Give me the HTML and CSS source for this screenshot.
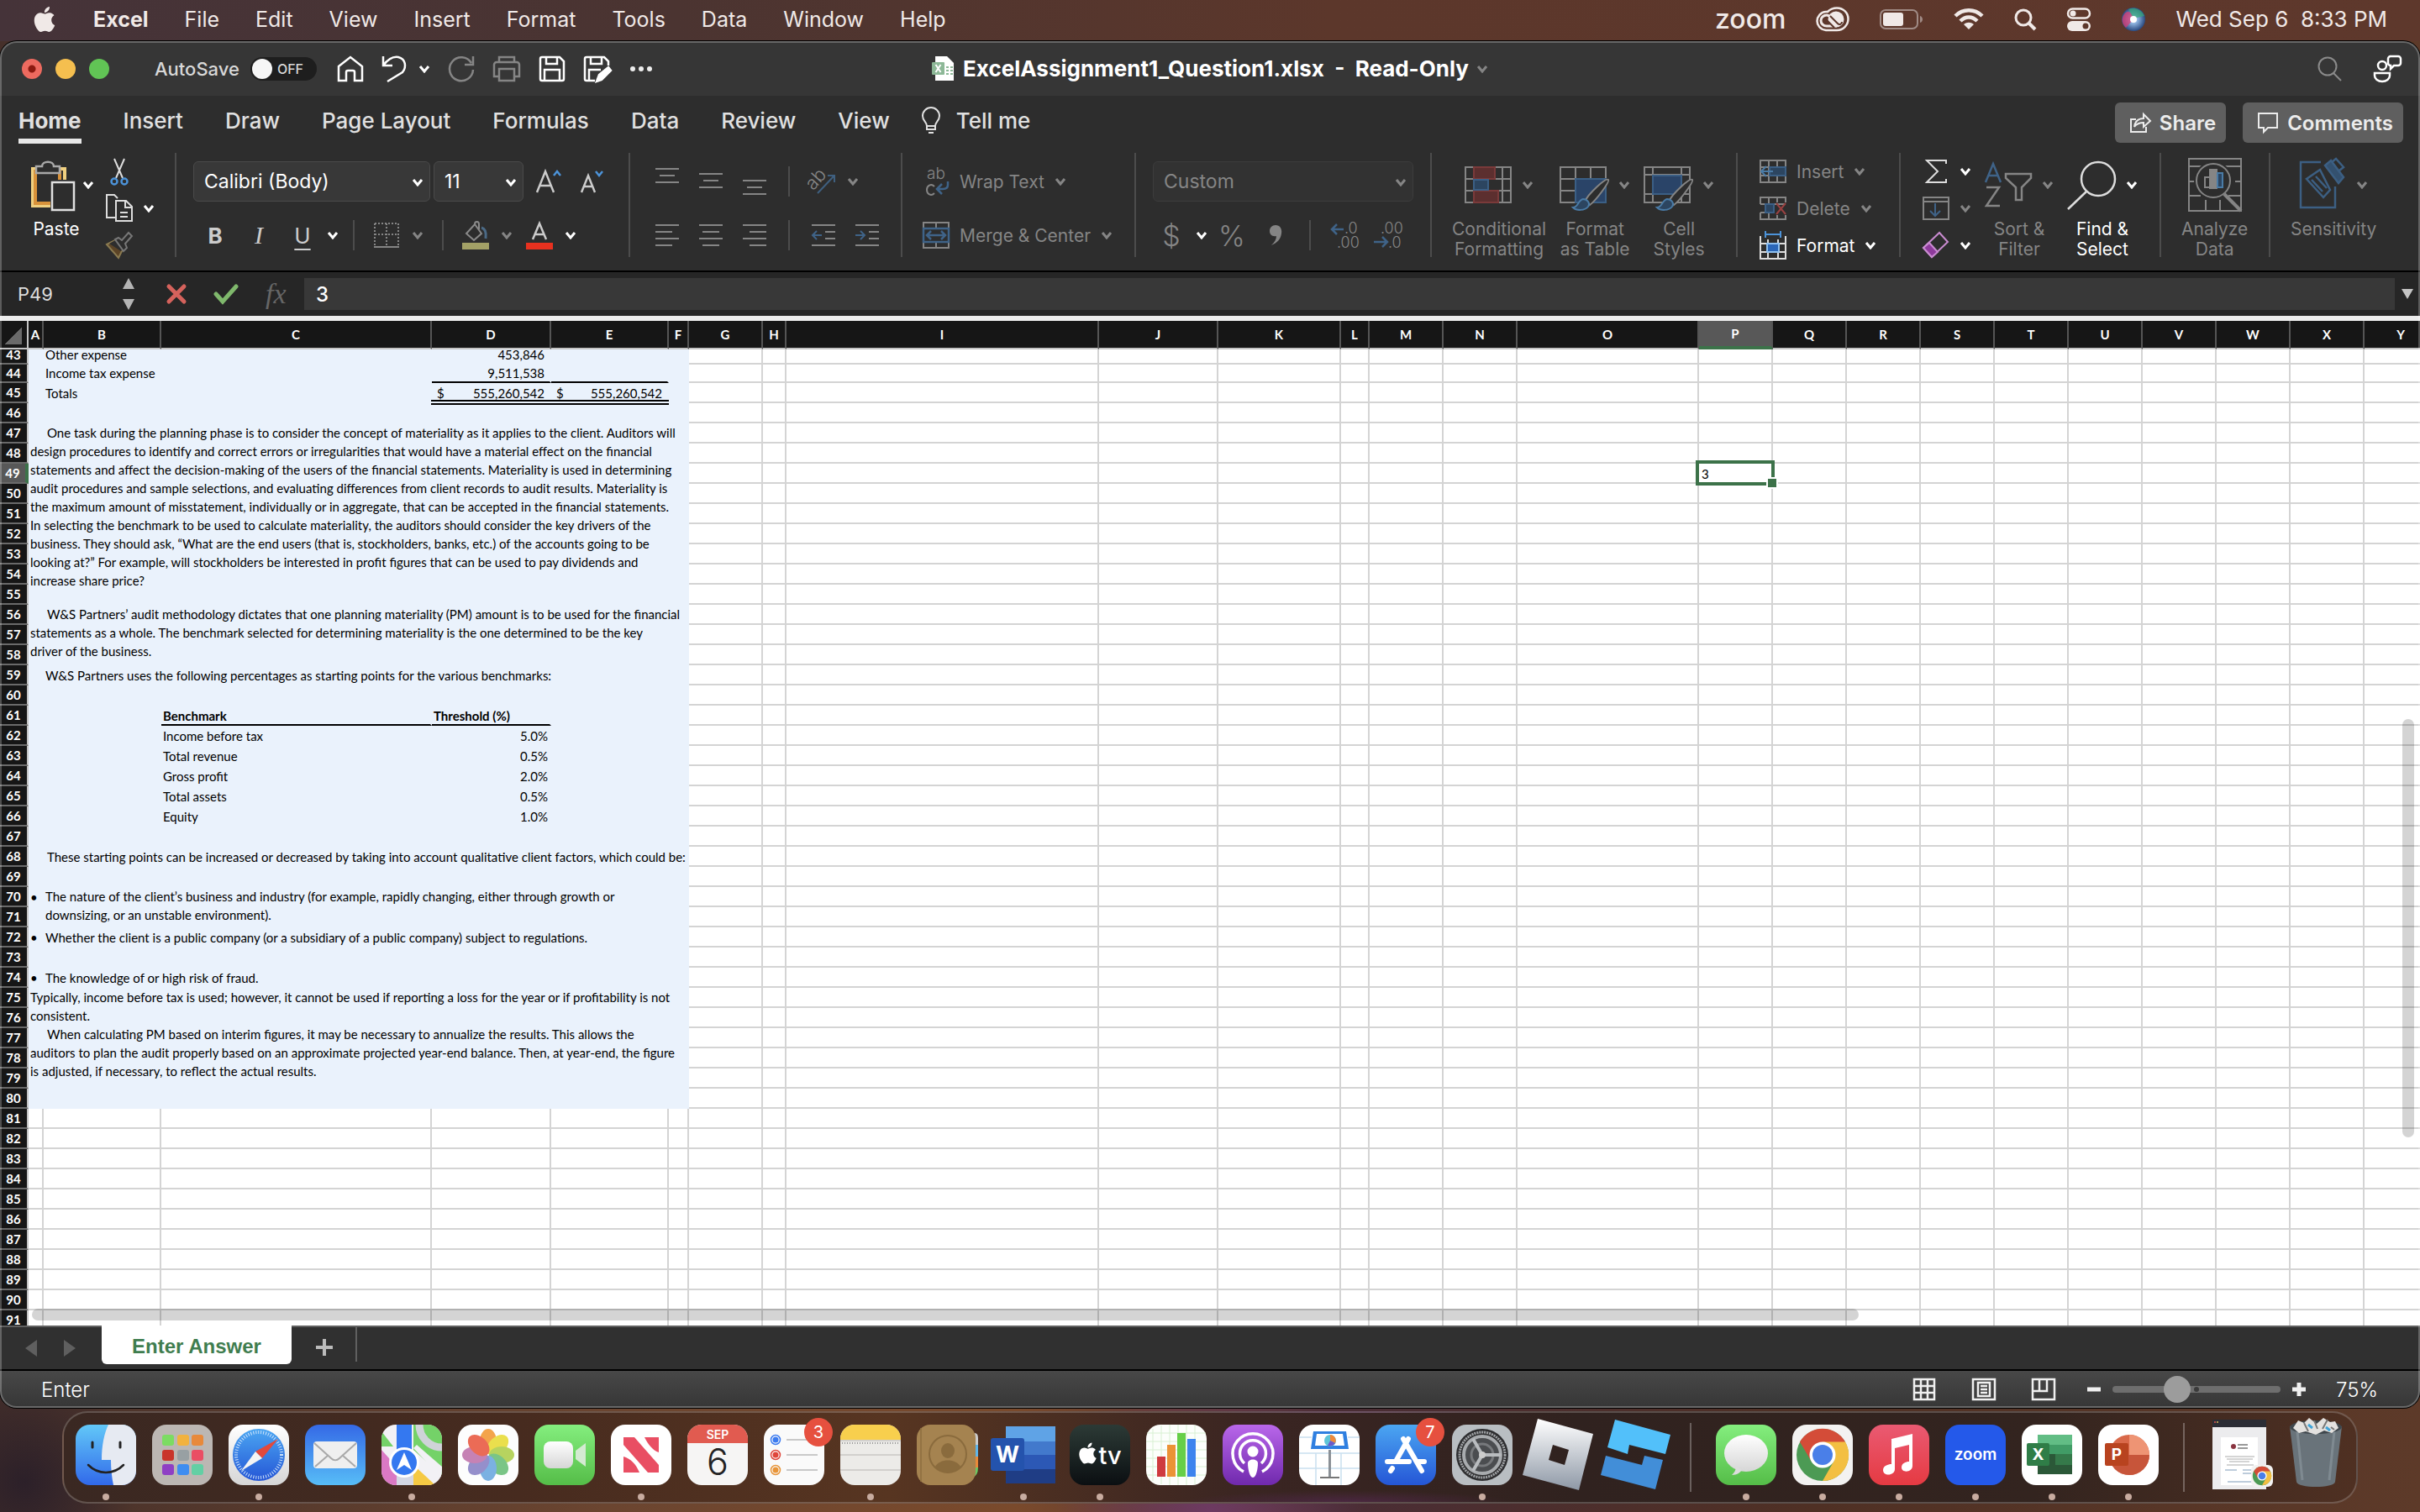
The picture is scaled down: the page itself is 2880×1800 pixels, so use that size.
FILE: index.html
```html
<!DOCTYPE html>
<html lang="en">
<head>
    <meta charset="UTF-8">
    <meta name="viewport" content="width=device-width, initial-scale=1.0">
    <title>ExcelAssignment1_Question1.xlsx</title>
    <link rel="stylesheet" href="styles.css">
</head>
<body>
    <svg class="defs" aria-hidden="true">
        <symbol id="chev" viewBox="0 0 14 10"><path d="M2 2l5 6 5-6" fill="none" stroke="currentColor" stroke-width="3"/></symbol>
        <symbol id="apple" viewBox="0 0 24 24"><path fill="currentColor" d="M12.152 6.896c-.948 0-2.415-1.078-3.96-1.04-2.04.027-3.91 1.183-4.961 3.014-2.117 3.675-.546 9.103 1.519 12.09 1.013 1.454 2.208 3.09 3.792 3.039 1.52-.065 2.09-.987 3.935-.987 1.831 0 2.35.987 3.96.948 1.637-.026 2.676-1.48 3.676-2.948 1.156-1.688 1.636-3.325 1.662-3.415-.039-.013-3.182-1.221-3.22-4.857-.026-3.04 2.48-4.494 2.597-4.559-1.429-2.09-3.623-2.324-4.39-2.376-2-.156-3.675 1.09-4.61 1.09zM15.53 3.83c.843-1.012 1.4-2.427 1.245-3.83-1.207.052-2.662.805-3.532 1.818-.78.896-1.454 2.338-1.273 3.714 1.338.104 2.715-.688 3.559-1.701"/></symbol>
        <symbol id="chrome" viewBox="0 0 72 72">
            <circle cx="36" cy="36" r="31" fill="#4c9a54"/>
            <path d="M36 36L9 20.500A31 31 0 0 1 63 20.500z" fill="#d44c38"/>
            <path d="M36 20.500H63A31 31 0 0 1 36 67L49.500 43.500z" fill="#f3bf42"/>
            <path d="M9 20.500L22.500 43.500 36 36V20z" fill="#d44c38"/>
            <circle cx="36" cy="36" r="15.500" fill="#fff"/>
            <circle cx="36" cy="36" r="12" fill="#4a7fe8"/>
        </symbol>
    </svg>

    <header class="menubar">
        <nav class="menus">
            <svg class="apple-logo" width="30" height="34"><use href="#apple"/></svg>
            <button class="app-name">Excel</button>
            <button>File</button>
            <button>Edit</button>
            <button>View</button>
            <button>Insert</button>
            <button>Format</button>
            <button>Tools</button>
            <button>Data</button>
            <button>Window</button>
            <button>Help</button>
        </nav>
        <div class="status-icons">
            <span class="zoom-word">zoom</span>
            <svg width="40" height="30" viewBox="0 0 40 30"><path d="M12 28C5 27 1.500 22 1.500 17S6 6 12 6h2C17 3 21 1.500 25 1.500c8 0 13.500 6 13.500 13S33 28 25 28z" fill="none" stroke="#f0e9e7" stroke-width="2.500"/><circle cx="24" cy="15" r="9.500" fill="#f0e9e7"/><path d="M25 23H13c-4 0-7-3-7-6.500S9 10 13 10c2 0 3 1 5 3l8 9" fill="none" stroke="#f0e9e7" stroke-width="3"/><path d="M13 16l9 9M17 11l9 9c2 2 5 1 5-2" fill="none" stroke="#5c372b" stroke-width="2"/></svg>
            <svg width="52" height="26" viewBox="0 0 52 26"><rect x="1" y="2" width="44" height="22" rx="6" fill="none" stroke="#a08b85" stroke-width="2"/><rect x="4" y="5" width="24" height="16" rx="3" fill="#f0e9e7"/><path d="M48 9c4 1 4 7 0 8z" fill="#a08b85"/></svg>
            <svg width="36" height="28" viewBox="0 0 36 28"><path d="M2 10C11 1 25 1 34 10M8 16c6-6 14-6 20 0" fill="none" stroke="#f0e9e7" stroke-width="4.500"/><path d="M12 20c4-3 8-3 12 0l-6 6z" fill="#f0e9e7"/></svg>
            <svg width="26" height="26" viewBox="0 0 26 26"><circle cx="11" cy="11" r="9" fill="none" stroke="#f0e9e7" stroke-width="3"/><path d="M17 17l8 8" stroke="#f0e9e7" stroke-width="4"/></svg>
            <svg width="30" height="28" viewBox="0 0 30 28"><rect x="2" y="1.500" width="26" height="11" rx="5.500" fill="none" stroke="#f0e9e7" stroke-width="2.500"/><circle cx="8" cy="7" r="3.500" fill="#f0e9e7"/><rect x="1" y="16" width="28" height="12" rx="6" fill="#f0e9e7"/><circle cx="23" cy="22" r="3.500" fill="#5c372b"/></svg>
            <svg width="28" height="28" viewBox="0 0 28 28"><defs><radialGradient id="siri"><stop offset="0" stop-color="#fff"/><stop offset=".35" stop-color="#8fb4e0"/><stop offset="1" stop-color="#2a4a80"/></radialGradient></defs><circle cx="14" cy="14" r="14" fill="url(#siri)"/><path d="M1 12C4 3 12 2 14 14L5 24C1 20 0 16 1 12z" fill="#d83b74" opacity=".75"/><path d="M8 2c7-3 16 0 19 8l-13 3z" fill="#35a877" opacity=".7"/><circle cx="14" cy="14" r="4" fill="#fff"/></svg>
            <time>Wed Sep 6&nbsp; 8:33 PM</time>
        </div>
    </header>

    <main class="window">
        <div class="titlebar">
            <div class="lights"><button class="light red" aria-label="Close"></button><button class="light yellow" aria-label="Minimize"></button><button class="light green" aria-label="Full screen"></button></div>
            <label class="autosave">AutoSave <span class="switch"><input type="checkbox"><span>OFF</span></span></label>
            <div class="quick">
                <button aria-label="Home"><svg width="32" height="32" viewBox="0 0 32 32"><path d="M2 13L16 2l14 11v17H21V20a2 2 0 0 0-2-2h-6a2 2 0 0 0-2 2v10H2z"/></svg></button>
                <button aria-label="Undo" class="undo"><svg width="30" height="32" viewBox="0 0 30 32"><path d="M2 1v11h11M2 12C8 4 14 1 20 2c9 2 10 12 5 18L7 31"/></svg><svg class="chev"><use href="#chev"/></svg></button>
                <button aria-label="Redo" class="dim"><svg width="32" height="32" viewBox="0 0 32 32"><path d="M30 1v10H20M28 9A14 14 0 1 0 30 17"/></svg></button>
                <button aria-label="Print" class="dim"><svg width="34" height="32" viewBox="0 0 34 32"><path d="M8 8V2h18v6M7 25H2V11a3 3 0 0 1 3-3h24a3 3 0 0 1 3 3v14h-5M8 16h18v14H8z"/></svg></button>
                <button aria-label="Save"><svg width="32" height="32" viewBox="0 0 32 32"><path d="M2 4a2 2 0 0 1 2-2h21l5 5v21a2 2 0 0 1-2 2H4a2 2 0 0 1-2-2zM9 2v8h13V2M7 30V17h18v13"/></svg></button>
                <button aria-label="Save as"><svg width="34" height="32" viewBox="0 0 34 32"><path d="M14 30H4a2 2 0 0 1-2-2V4a2 2 0 0 1 2-2h21l5 5v5M9 2v8h13V2M7 30V17h14"/><path d="M16 31l3-8 11-9 3 4-11 11z" fill="#fff"/></svg></button>
                <button aria-label="More"><svg width="28" height="8" viewBox="0 0 28 8"><g fill="#eee" stroke="none"><circle cx="4" cy="4" r="3"/><circle cx="14" cy="4" r="3"/><circle cx="24" cy="4" r="3"/></g></svg></button>
            </div>
            <h1 class="doc-title">
                <svg width="28" height="30" viewBox="0 0 28 30"><path d="M4 0h14l8 8v21H4z" fill="#fff"/><rect x="0" y="7" width="15" height="15" rx="1" fill="#8db897"/><path d="M4.500 10l6 9M10.500 10l-6 9" stroke="#fff" stroke-width="2"/><path d="M17 12h3v2h-3zM22 12h3v2h-3zM17 16h3v2h-3zM22 16h3v2h-3zM17 20h3v2h-3zM22 20h3v2h-3z" fill="#8db897"/></svg>
                <span>ExcelAssignment1_Question1.xlsx&nbsp; -&nbsp; Read-Only</span>
                <svg class="chev dim"><use href="#chev"/></svg>
            </h1>
            <div class="title-right">
                <button aria-label="Search"><svg width="30" height="30" viewBox="0 0 30 30"><circle cx="12" cy="12" r="10.500" fill="none" stroke="#8a8a8a" stroke-width="2"/><path d="M19 20l9 9" stroke="#8a8a8a" stroke-width="2"/></svg></button>
                <button aria-label="People"><svg width="34" height="34" viewBox="0 0 34 34" fill="none" stroke="#fff" stroke-width="2.500"><circle cx="11" cy="13" r="5"/><path d="M2 22h18v3c0 4-4 7-9 7s-9-3-9-7zM20 2h10a3 3 0 0 1 3 3v5a3 3 0 0 1-3 3h-5l-4 4v-4a3 3 0 0 1-3-3V5a3 3 0 0 1 3-3z"/></svg></button>
            </div>
        </div>

        <nav class="tabs">
            <button class="active">Home</button>
            <button>Insert</button>
            <button>Draw</button>
            <button>Page Layout</button>
            <button>Formulas</button>
            <button>Data</button>
            <button>Review</button>
            <button>View</button>
            <button class="tell"><svg width="22" height="32" viewBox="0 0 22 32"><path d="M6 22c0-5-5-6-5-12a10 10 0 0 1 20 0c0 6-5 7-5 12v4H6zM6 22h10M8 30h6" fill="none" stroke="currentColor" stroke-width="2"/></svg>Tell me</button>
            <div class="tab-actions">
                <button><svg width="26" height="26" viewBox="0 0 26 26"><path d="M8 9H2v15h18v-6M6 18c1-7 5-10 11-10V3l8 8-8 7v-5c-5 0-8 1-11 5z" fill="none" stroke="currentColor" stroke-width="2"/></svg>Share</button>
                <button><svg width="26" height="26" viewBox="0 0 26 26"><path d="M2 2h22v17H13l-5 5v-5H2z" fill="none" stroke="currentColor" stroke-width="2"/></svg>Comments</button>
            </div>
        </nav>

        <section class="ribbon">
            <div class="group clipboard">
                <button class="big paste">
                    <span class="big-icon"><svg width="56" height="64" viewBox="0 0 56 64"><path d="M5 13h38v44H5z" fill="none" stroke="#f0d080" stroke-width="4"/><path d="M8 14v40h20M37 14v14" fill="none" stroke="#d8923a" stroke-width="4"/><rect x="26" y="26" width="30" height="38" fill="#2d2d2d"/><path d="M9 18v-8h7c0-7 14-7 14 0h7v8z" fill="#2d2d2d" stroke="#a8a8a8" stroke-width="2.500"/><rect x="28" y="29" width="26" height="33" fill="#2d2d2d" stroke="#e0e0e0" stroke-width="2.500"/></svg><svg class="chev"><use href="#chev"/></svg></span>
                    <span>Paste</span>
                </button>
                <div class="stack">
                    <button aria-label="Cut"><svg width="32" height="34" viewBox="0 0 32 34"><path d="M10 2l10 23M22 2L12 25" stroke="#ddd" stroke-width="2"/><g fill="none" stroke="#4c93d9" stroke-width="2.500"><circle cx="10" cy="29" r="3.500"/><circle cx="22" cy="29" r="3.500"/></g></svg></button>
                    <button aria-label="Copy"><svg width="32" height="34" viewBox="0 0 32 34" fill="none" stroke="#ddd" stroke-width="2"><path d="M11 28H1V1h9l4 4M12 8h12l7 7v17H12zM23 8v8h8M17 22h9M17 27h9"/></svg><svg class="chev"><use href="#chev"/></svg></button>
                    <button aria-label="Format painter"><svg width="32" height="32" viewBox="0 0 32 32"><path d="M1 15l12-6 8 10-6 12z" fill="#5c4426" stroke="#8a7a50" stroke-width="2"/><path d="M4 14l9-5 8 10-3 4z" fill="#2d2d2d"/><path d="M11 9l4-2 4 3 8-9 4 4-8 9 2 5-4 4z" fill="#2d2d2d" stroke="#777" stroke-width="2"/></svg></button>
                </div>
            </div>
            <div class="rule"></div>

            <div class="group font">
                <div class="row">
                    <div class="pick pick-font"><select aria-label="Font"><option>Calibri (Body)</option></select><svg class="chev"><use href="#chev"/></svg></div>
                    <div class="pick pick-size"><select aria-label="Font size"><option>11</option></select><svg class="chev"><use href="#chev"/></svg></div>
                    <div class="tools">
                        <button class="tool" aria-label="Grow font"><svg width="32" height="30" viewBox="0 0 32 30"><path d="M2 28L12 3l10 25M5 20h14" fill="none" stroke="#ccc" stroke-width="2.500"/><path d="M22 8l4-5 4 5" fill="none" stroke="#4c93d9" stroke-width="2.500"/></svg></button>
                        <button class="tool" aria-label="Shrink font"><svg width="32" height="30" viewBox="0 0 32 30"><path d="M3 28L11 8l8 20M6 21h10" fill="none" stroke="#ccc" stroke-width="2.500"/><path d="M20 3l4 5 4-5" fill="none" stroke="#4c93d9" stroke-width="2.500"/></svg></button>
                    </div>
                </div>
                <div class="row tools">
                    <button class="tool bold">B</button>
                    <button class="tool italic">I</button>
                    <button class="tool underline">U</button>
                    <button class="only-chev" aria-label="Underline style"><svg class="chev"><use href="#chev"/></svg></button>
                    <div class="mini-rule"></div>
                    <button class="split dim" aria-label="Borders"><svg width="32" height="32" viewBox="0 0 32 32" fill="none" stroke="currentColor" stroke-width="2"><path d="M2 2h28M2 2v26M30 2v26M16 2v26M2 15h28" stroke-dasharray="2 2"/><path d="M1 30h30"/></svg><svg class="chev"><use href="#chev"/></svg></button>
                    <div class="mini-rule"></div>
                    <button class="split dim" aria-label="Fill color"><svg width="32" height="34" viewBox="0 0 32 34"><path d="M5 15L15 4l8 11-9 8zM15 4c0-4 5-4 5 0v6" fill="none" stroke="#8a8a8a" stroke-width="2"/><path d="M23 8c4 1 6 5 5 13" fill="none" stroke="#4b6a86" stroke-width="3"/><rect y="26" width="32" height="8" fill="#a3a166"/></svg><svg class="chev"><use href="#chev"/></svg></button>
                    <button class="split" aria-label="Font color"><svg width="32" height="34" viewBox="0 0 32 34"><path d="M8 22L16 3l8 19M11 16h10" fill="none" stroke="#ccc" stroke-width="2.500"/><rect y="26" width="32" height="8" fill="#e8311f"/></svg><svg class="chev"><use href="#chev"/></svg></button>
                </div>
            </div>
            <div class="rule"></div>

            <div class="group align dim">
                <div class="row tools">
                    <button class="tool" aria-label="Top"><svg width="28" height="34" viewBox="0 0 28 34"><path d="M0 2h28M5 10h18M0 18h28"/></svg></button>
                    <button class="tool" aria-label="Middle"><svg width="28" height="34" viewBox="0 0 28 34"><path d="M0 8h28M5 16h18M0 24h28"/></svg></button>
                    <button class="tool" aria-label="Bottom"><svg width="28" height="34" viewBox="0 0 28 34"><path d="M0 16h28M5 24h18M0 32h28"/></svg></button>
                    <div class="mini-rule"></div>
                    <button class="split" aria-label="Orientation"><svg width="32" height="32" viewBox="0 0 32 32"><text x="-2" y="22" font-size="22" transform="rotate(-48 8 16)" class="glyph">ab</text><path d="M11 30L31 9M23 9h8v8" stroke="#3f5f7f"/></svg><svg class="chev"><use href="#chev"/></svg></button>
                </div>
                <div class="row tools">
                    <button class="tool" aria-label="Left"><svg width="28" height="28" viewBox="0 0 28 28"><path d="M0 2h28M0 10h20M0 18h28M0 26h20"/></svg></button>
                    <button class="tool" aria-label="Center"><svg width="28" height="28" viewBox="0 0 28 28"><path d="M0 2h28M4 10h20M0 18h28M4 26h20"/></svg></button>
                    <button class="tool" aria-label="Right"><svg width="28" height="28" viewBox="0 0 28 28"><path d="M0 2h28M8 10h20M0 18h28M8 26h20"/></svg></button>
                    <div class="mini-rule"></div>
                    <button class="tool" aria-label="Outdent"><svg width="28" height="28" viewBox="0 0 28 28"><path d="M0 2h28M16 10h12M16 18h12M0 26h28"/><path d="M12 14H2M6 9l-5 5 5 5" stroke="#3f6388"/></svg></button>
                    <button class="tool" aria-label="Indent"><svg width="28" height="28" viewBox="0 0 28 28"><path d="M0 2h28M16 10h12M16 18h12M0 26h28"/><path d="M0 14h10M6 9l5 5-5 5" stroke="#3f6388"/></svg></button>
                </div>
            </div>
            <div class="rule"></div>

            <div class="group wrap dim">
                <div class="row"><button class="labeled"><svg width="32" height="34" viewBox="0 0 32 34"><text x="5" y="14" font-size="19" class="glyph">ab</text><path d="M14 23c-4-4-9-1-9 4s5 8 9 4" fill="none" stroke="currentColor" stroke-width="2"/><path d="M30 17v4c0 4-3 5-6 5h-6M23 20l-6 6 6 6" fill="none" stroke="#3f6388" stroke-width="2.500"/></svg>Wrap Text<svg class="chev"><use href="#chev"/></svg></button></div>
                <div class="row"><button class="labeled"><svg width="32" height="32" viewBox="0 0 32 32" fill="none" stroke="currentColor" stroke-width="2"><path d="M1 1h30v30H1zM16 1v6M16 25v6"/><path d="M1 8h30v16H1zM6 16h20M10 11l-5 5 5 5M22 11l5 5-5 5" stroke="#3f6388" stroke-width="2.500"/></svg>Merge &amp; Center<svg class="chev"><use href="#chev"/></svg></button></div>
            </div>
            <div class="rule"></div>

            <div class="group number">
                <div class="row"><div class="pick pick-number dim"><select aria-label="Number format"><option>Custom</option></select><svg class="chev"><use href="#chev"/></svg></div></div>
                <div class="row tools dim">
                    <button class="tool sign">$</button>
                    <button class="only-chev bright" aria-label="Currency"><svg class="chev"><use href="#chev"/></svg></button>
                    <button class="tool sign">%</button>
                    <button class="tool" aria-label="Comma"><svg width="16" height="28" viewBox="0 0 16 28"><path d="M8 2c5 0 8 4 7 10-1 7-5 11-12 14 4-4 6-7 6-11C4 16 1 13 1 9s3-7 7-7z" fill="currentColor"/></svg></button>
                    <div class="mini-rule"></div>
                    <button class="tool" aria-label="Increase decimal"><svg width="34" height="32" viewBox="0 0 34 32"><text x="17" y="14" font-size="18" class="glyph">.0</text><text x="8" y="31" font-size="18" class="glyph">.00</text><path d="M16 9H2M8 3L2 9l6 6" fill="none" stroke="#3f6388" stroke-width="2.500"/></svg></button>
                    <button class="tool" aria-label="Decrease decimal"><svg width="34" height="32" viewBox="0 0 34 32"><text x="8" y="14" font-size="18" class="glyph">.00</text><text x="17" y="31" font-size="18" class="glyph">.0</text><path d="M0 24h16M10 18l6 6-6 6" fill="none" stroke="#3f6388" stroke-width="2.500"/></svg></button>
                </div>
            </div>
            <div class="rule"></div>

            <div class="group styles dim">
                <button class="big">
                    <span class="big-icon"><svg width="56" height="64" viewBox="0 0 56 64" fill="none" stroke="currentColor" stroke-width="2"><path d="M1 11h54v42H1zM1 25h54M1 39h54M11 11v42M45 11v42"/><path d="M11 11h25v14H11zM11 39h29v14H11z" fill="#5c2f2f" stroke="#7a3a3a"/><path d="M11 26h17v12H11z" fill="#2c4560" stroke="#3b5f85"/></svg><svg class="chev"><use href="#chev"/></svg></span>
                    <span>Conditional<br>Formatting</span>
                </button>
                <button class="big">
                    <span class="big-icon"><svg width="58" height="64" viewBox="0 0 58 64" fill="none" stroke="currentColor" stroke-width="2"><path d="M1 11h54v42H1zM1 25h54M1 39h54M19 11v42M37 11v42"/><path d="M19 25h36v28H19z" fill="#2a4468" stroke="#3b5f85"/><path d="M58 26c2 2-14 24-22 30l-6-4c4-9 25-29 28-26z" fill="#2d2d2d"/><path d="M28 49c5 0 9 5 6 9-4 5-14 5-18 1 6 0 6-9 12-10z" fill="#2c4560" stroke="#4a7ba6"/></svg><svg class="chev"><use href="#chev"/></svg></span>
                    <span>Format<br>as Table</span>
                </button>
                <button class="big">
                    <span class="big-icon"><svg width="58" height="64" viewBox="0 0 58 64" fill="none" stroke="currentColor" stroke-width="2"><path d="M1 11h54v42H1zM1 20h54M1 43h54M11 11v42M45 11v42"/><path d="M11 21h34v22H11z" fill="#2a4468" stroke="#3b5f85"/><path d="M58 26c2 2-14 24-22 30l-6-4c4-9 25-29 28-26z" fill="#2d2d2d"/><path d="M28 49c5 0 9 5 6 9-4 5-14 5-18 1 6 0 6-9 12-10z" fill="#2c4560" stroke="#4a7ba6"/></svg><svg class="chev"><use href="#chev"/></svg></span>
                    <span>Cell<br>Styles</span>
                </button>
            </div>
            <div class="rule"></div>

            <div class="group cells">
                <div class="stack">
                    <button class="dim"><svg width="32" height="28" viewBox="0 0 32 28" fill="none" stroke="currentColor" stroke-width="2"><path d="M1 1h30v26H1zM11 1v26M21 1v26M1 9h30M1 19h30"/><path d="M12 9h19v10H12z" fill="#2c4560" stroke="#3b5f85"/><path d="M16 14H3M8 8l-6 6 6 6" stroke="#4a7ba6"/></svg>Insert<svg class="chev"><use href="#chev"/></svg></button>
                    <button class="dim"><svg width="32" height="28" viewBox="0 0 32 28" fill="none" stroke="currentColor" stroke-width="2"><path d="M1 9V1h30v6M1 19v8h30v-5M11 1v8M21 1v6M11 19v8M21 22v5M1 9h30M1 19h14"/><path d="M7 9h10v10H7z" fill="#2c4560" stroke="#3b5f85"/><path d="M20 8l11 13M31 8L20 21" stroke="#9a4040"/></svg>Delete<svg class="chev"><use href="#chev"/></svg></button>
                    <button><svg width="32" height="34" viewBox="0 0 32 34" fill="none" stroke="#ddd" stroke-width="2"><path d="M1 6v27h30V6M1 15h30M1 25h30M10 10v23M22 10v23"/><path d="M9 15h14v10H9z" fill="#2a66b8" stroke="#8fc0f0"/><path d="M7 4h18M7 0v8M25 0v8" stroke="#4c93d9"/></svg>Format<svg class="chev"><use href="#chev"/></svg></button>
                </div>
            </div>
            <div class="rule"></div>

            <div class="group edit">
                <div class="stack">
                    <button aria-label="Sum"><svg width="32" height="30" viewBox="0 0 32 30"><path d="M28 6V2H5l13 13L5 28h23v-4" fill="none" stroke="#ddd" stroke-width="2"/></svg><svg class="chev"><use href="#chev"/></svg></button>
                    <button class="dim" aria-label="Fill"><svg width="32" height="28" viewBox="0 0 32 28" fill="none" stroke="currentColor" stroke-width="2"><path d="M1 1h30v26H1zM1 6h30"/><path d="M15 8v15M9 17l6 6 6-6" stroke="#3f6388"/></svg><svg class="chev"><use href="#chev"/></svg></button>
                    <button aria-label="Clear"><svg width="32" height="32" viewBox="0 0 32 32"><path d="M1 19L20 1l10 11-19 18z" fill="none" stroke="#c98bd0" stroke-width="2"/><path d="M1 19l7-6 10 11-7 6z" fill="#8e3a9c" stroke="#c98bd0" stroke-width="2"/></svg><svg class="chev"><use href="#chev"/></svg></button>
                </div>
                <button class="big dim">
                    <span class="big-icon"><svg width="56" height="64" viewBox="0 0 56 64" fill="none" stroke="currentColor" stroke-width="2.500"><path d="M1 29l9-22 9 22M4 21h12" stroke="#3f6388"/><path d="M2 35h15L2 57h16M25 19h30v5L44 35v15h-7V35L25 24z"/></svg><svg class="chev"><use href="#chev"/></svg></span>
                    <span>Sort &amp;<br>Filter</span>
                </button>
                <button class="big">
                    <span class="big-icon"><svg width="58" height="64" viewBox="0 0 58 64" fill="none" stroke="#ddd" stroke-width="2.500"><circle cx="37" cy="25" r="20"/><path d="M23 40L1 61"/></svg><svg class="chev"><use href="#chev"/></svg></span>
                    <span>Find &amp;<br>Select</span>
                </button>
            </div>
            <div class="rule"></div>

            <div class="group analyze dim">
                <button class="big">
                    <span class="big-icon"><svg width="64" height="64" viewBox="0 0 64 64" fill="none" stroke="currentColor" stroke-width="2"><path d="M1 1h62v62H1zM1 10h62M1 28h8M1 45h14M56 28h7M48 45h15M21 50v13M38 50v13M52 10"/><circle cx="30" cy="27" r="23" fill="#2d2d2d" stroke="none"/><circle cx="30" cy="27" r="20"/><path d="M43 43l20 20" stroke-width="4"/><rect x="20" y="23" width="6" height="12"/><rect x="26" y="14" width="8" height="22" fill="currentColor"/><rect x="35" y="18" width="6" height="17" fill="#2c4560" stroke="#4a7ba6"/></svg></span>
                    <span>Analyze<br>Data</span>
                </button>
            </div>
            <div class="rule"></div>

            <div class="group sens dim">
                <button class="big">
                    <span class="big-icon"><svg width="56" height="64" viewBox="0 0 56 64" fill="none" stroke="#3c5f83" stroke-width="2.500"><path d="M26 5H2v54h41V34"/><path d="M31 9l7-6 15 20-6 7z" fill="#34516f"/><path d="M39 5l5-4 9 10-5 4M25 14L9 25l20 22 8-9z"/><path d="M15 26l13 14M20 22l13 14"/></svg><svg class="chev"><use href="#chev"/></svg></span>
                    <span>Sensitivity</span>
                </button>
            </div>
        </section>

        <div class="formula-bar">
            <div class="name-box"><input aria-label="Name box" value="P49">
                <svg width="14" height="38" viewBox="0 0 14 38"><path d="M0 13L7 0l7 13zM0 25l7 13 7-13z" fill="#b4b4b4"/></svg></div>
            <button aria-label="Cancel"><svg width="24" height="24" viewBox="0 0 24 24"><path d="M3 3l18 18M21 3L3 21" stroke="#d5625c" stroke-width="5" stroke-linecap="round"/></svg></button>
            <button aria-label="Confirm"><svg width="30" height="24" viewBox="0 0 30 24"><path d="M3 12l8 9L27 3" fill="none" stroke="#7fb86c" stroke-width="5" stroke-linecap="round"/></svg></button>
            <span class="fx">fx</span>
            <input class="formula" aria-label="Formula" value="3">
            <svg width="14" height="12" viewBox="0 0 14 12"><path d="M0 0h14L7 12z" fill="#c4c4c4"/></svg>
        </div>

        <div class="sheet-area">
            <div class="sheet" id="sheet">
                <table id="grid">
                    <colgroup></colgroup>
                    <thead></thead>
                    <tbody></tbody>
                </table>
            </div>
            <div class="bar-v"></div>
            <div class="bar-h"></div>
        </div>

        <div class="sheet-tabs">
            <button aria-label="Previous sheet"><svg width="14" height="20" viewBox="0 0 14 20"><path d="M14 0v20L0 10z" fill="#5f5f5f"/></svg></button>
            <button aria-label="Next sheet"><svg width="14" height="20" viewBox="0 0 14 20"><path d="M0 0v20l14-10z" fill="#5f5f5f"/></svg></button>
            <button class="sheet-tab">Enter Answer</button>
            <button class="add" aria-label="Add sheet"><svg width="20" height="20" viewBox="0 0 20 20"><path d="M10 0v20M0 10h20" stroke="#bbb" stroke-width="4"/></svg></button>
        </div>

        <footer class="statusbar">
            <span>Enter</span>
            <div class="views">
                <button aria-label="Normal"><svg width="28" height="28" viewBox="0 0 28 28"><path d="M2 2h24v24H2zM10 2v24M18 2v24M2 10h24M2 18h24"/></svg></button>
                <button aria-label="Page layout"><svg width="28" height="28" viewBox="0 0 28 28"><path d="M1 2h26v24H1zM7 6h14v16H7zM10 10h8M10 14h8M10 18h8"/></svg></button>
                <button aria-label="Page break"><svg width="28" height="28" viewBox="0 0 28 28"><path d="M1 2h26v24H1zM9 2v14M1 16h17V2"/></svg></button>
            </div>
            <div class="zoomer">
                <button aria-label="Zoom out"><svg width="16" height="16" viewBox="0 0 16 16"><path d="M0 8h16"/></svg></button>
                <div class="slider"><input type="range" min="0" max="100" value="36" aria-label="Zoom"><i></i></div>
                <button aria-label="Zoom in"><svg width="16" height="16" viewBox="0 0 16 16"><path d="M0 8h16M8 0v16"/></svg></button>
            </div>
            <span>75%</span>
        </footer>
    </main>

    <nav class="dock">
        <svg class="defs" aria-hidden="true">
            <linearGradient id="g-finder" x2="0" y2="1"><stop offset="0" stop-color="#62c8f8"/><stop offset="1" stop-color="#3169ea"/></linearGradient>
            <linearGradient id="g-mail" x2="0" y2="1"><stop offset="0" stop-color="#3569e6"/><stop offset="1" stop-color="#57bdf7"/></linearGradient>
            <linearGradient id="g-green" x2="0" y2="1"><stop offset="0" stop-color="#84ee7e"/><stop offset="1" stop-color="#55bd48"/></linearGradient>
            <linearGradient id="g-purple" x2="0" y2="1"><stop offset="0" stop-color="#b967ea"/><stop offset="1" stop-color="#7029ad"/></linearGradient>
            <linearGradient id="g-blue" x2="0" y2="1"><stop offset="0" stop-color="#4ba6f2"/><stop offset="1" stop-color="#2556d6"/></linearGradient>
            <linearGradient id="g-red" x2="0" y2="1"><stop offset="0" stop-color="#ea5a72"/><stop offset="1" stop-color="#e53a42"/></linearGradient>
            <linearGradient id="g-white" x2="0" y2="1"><stop offset="0" stop-color="#fff"/><stop offset="1" stop-color="#d6d6d6"/></linearGradient>
            <linearGradient id="g-steel" x2="0" y2="1"><stop offset="0" stop-color="#fff"/><stop offset="1" stop-color="#8e98a6"/></linearGradient>
            <linearGradient id="g-tv" x2="0" y2="1"><stop offset="0" stop-color="#2c3a36"/><stop offset="1" stop-color="#0b0f12"/></linearGradient>
        </svg>
        <button class="app running" aria-label="Finder"><svg viewBox="0 0 72 72"><rect width="72" height="72" rx="17" fill="url(#g-finder)"/><path d="M39 0h16a17 17 0 0 1 17 17v38a17 17 0 0 1-17 17H45c-2-9-3-20-3-30H31C31 25 34 10 39 0z" fill="#e6eaf2"/><path d="M20 21v6M53 21v6" stroke="#222" stroke-width="3" stroke-linecap="round"/><path d="M15 48c12 12 30 12 42 0" fill="none" stroke="#222" stroke-width="2.500" stroke-linecap="round"/></svg></button>
        <button class="app" aria-label="Launchpad"><svg viewBox="0 0 72 72"><rect width="72" height="72" rx="17" fill="#bcb7b3"/><rect x="12" y="12" width="14" height="13" rx="3" fill="#7cdc62"/><rect x="30" y="12" width="14" height="13" rx="3" fill="#f2b23e"/><rect x="47" y="12" width="14" height="13" rx="3" fill="#e8893a"/><rect x="12" y="30" width="14" height="13" rx="3" fill="#c9342a"/><rect x="30" y="30" width="14" height="13" rx="3" fill="#98a0a3"/><rect x="47" y="30" width="14" height="13" rx="3" fill="#ea4e64"/><rect x="12" y="47" width="14" height="13" rx="3" fill="#8f3fc4"/><rect x="30" y="47" width="14" height="13" rx="3" fill="#3f8df0"/><rect x="47" y="47" width="14" height="13" rx="3" fill="#63cfa4"/></svg></button>
        <button class="app running" aria-label="Safari"><svg viewBox="0 0 72 72"><rect width="72" height="72" rx="17" fill="url(#g-white)"/><circle cx="36" cy="36" r="31" fill="url(#g-blue)"/><circle cx="36" cy="36" r="27" fill="none" stroke="#cfe4fa" stroke-width="4" stroke-dasharray="1 2"/><path d="M59 17L40 40 32 32z" fill="#e2493c"/><path d="M15 55l17-23 8 8z" fill="#f4f4f4"/></svg></button>
        <button class="app" aria-label="Mail"><svg viewBox="0 0 72 72"><rect width="72" height="72" rx="17" fill="url(#g-mail)"/><rect x="10" y="20" width="52" height="32" rx="4" fill="#efefef"/><path d="M11 22l20 18c3 3 7 3 10 0l20-18M12 50l16-14M60 50L44 36" fill="none" stroke="#a9a9a9" stroke-width="2"/></svg></button>
        <button class="app running" aria-label="Maps"><svg viewBox="0 0 72 72"><defs><clipPath id="tile"><rect width="72" height="72" rx="17"/></clipPath></defs><g clip-path="url(#tile)"><rect width="72" height="72" fill="#f2f1f5"/><path d="M0 8l14 18H0zM38 0h34v60L38 30z" fill="#74d268"/><path d="M45 0a27 27 0 0 0 27 27" fill="none" stroke="#cfd3d8" stroke-width="9"/><path d="M0 30l18 20v22H0z" fill="#da79c4"/><path d="M38 72V48l26 24z" fill="#f5c944"/><path d="M38 28l34 36V50L42 24z" fill="#f2f1f5"/><rect x="18" width="18" height="72" fill="#3478f0"/><rect x="18" y="50" width="20" height="22" fill="#d4d7e4"/><circle cx="27" cy="45" r="18" fill="#fff"/><circle cx="27" cy="45" r="15" fill="#3478f0"/><path d="M27 33l9 21-9-6-9 6z" fill="#fff"/></g></svg></button>
        <button class="app" aria-label="Photos"><svg viewBox="0 0 72 72"><rect width="72" height="72" rx="17" fill="#fdfdfd"/><g opacity=".9"><ellipse cx="36" cy="20" rx="10" ry="15" fill="#f29b38"/><ellipse cx="36" cy="20" rx="10" ry="15" fill="#e8dc3a" transform="rotate(45 36 36)"/><ellipse cx="36" cy="20" rx="10" ry="15" fill="#b0cf4e" transform="rotate(90 36 36)"/><ellipse cx="36" cy="20" rx="10" ry="15" fill="#6cbf7a" transform="rotate(135 36 36)"/><ellipse cx="36" cy="20" rx="10" ry="15" fill="#6da9e0" transform="rotate(180 36 36)"/><ellipse cx="36" cy="20" rx="10" ry="15" fill="#8a84c6" transform="rotate(225 36 36)"/><ellipse cx="36" cy="20" rx="10" ry="15" fill="#c175ad" transform="rotate(270 36 36)"/><ellipse cx="36" cy="20" rx="10" ry="15" fill="#ea5c44" transform="rotate(315 36 36)"/></g></svg></button>
        <button class="app" aria-label="FaceTime"><svg viewBox="0 0 72 72"><rect width="72" height="72" rx="17" fill="url(#g-green)"/><rect x="11" y="20" width="35" height="32" rx="8" fill="url(#g-white)"/><path d="M49 31l12-9v28l-12-9z" fill="#d4ead2"/></svg></button>
        <button class="app running" aria-label="News"><svg viewBox="0 0 72 72"><rect width="72" height="72" rx="17" fill="#fff"/><path d="M15 15h13l29 33v9H44L15 24z" fill="#e94e63"/><path d="M40 15h17v18C50 31 44 23 40 15zM15 38v19h19c-4-10-11-17-19-19z" fill="#e94e63"/></svg></button>
        <button class="app" aria-label="Calendar"><svg viewBox="0 0 72 72"><rect width="72" height="72" rx="17" fill="#f6f5f4"/><path d="M0 22v-5A17 17 0 0 1 17 0h38a17 17 0 0 1 17 17v5z" fill="#e15b50"/><text x="36" y="17" font-size="14" font-weight="600" fill="#fff" text-anchor="middle">SEP</text><text x="36" y="60" font-size="43" font-weight="300" fill="#222" text-anchor="middle">6</text></svg></button>
        <button class="app" aria-label="Reminders"><svg viewBox="0 0 72 72"><rect width="72" height="72" rx="17" fill="#fafafa"/><g fill="none" stroke-width="1.500"><circle cx="14" cy="18" r="5.500" stroke="#3c7bf0"/><circle cx="14" cy="36" r="5.500" stroke="#e0463a"/><circle cx="14" cy="54" r="5.500" stroke="#e8953a"/></g><circle cx="14" cy="18" r="3.500" fill="#3c7bf0"/><circle cx="14" cy="36" r="3.500" fill="#e0463a"/><circle cx="14" cy="54" r="3.500" fill="#e8953a"/><path d="M27 18h37M27 36h37M27 54h37" stroke="#b9b9b9" stroke-width="1.500"/></svg><span class="badge">3</span></button>
        <button class="app running" aria-label="Notes"><svg viewBox="0 0 72 72"><rect width="72" height="72" rx="17" fill="#ecebe8"/><path d="M0 18v-1A17 17 0 0 1 17 0h38a17 17 0 0 1 17 17v1z" fill="#f8cf4d"/><path d="M0 19h72M0 36h72M0 54h72" stroke="#c9c8c4" stroke-width="1.500"/><path d="M2 22h68" stroke="#999" stroke-width="2" stroke-dasharray="1 2"/></svg></button>
        <button class="app" aria-label="Contacts"><svg viewBox="0 0 72 72"><path d="M66 10h3q4 0 4 6v8h-7z" fill="#ccc"/><path d="M66 24h7v14h-7z" fill="#5fb5e8"/><path d="M66 38h7v13h-7z" fill="#e8893a"/><path d="M66 51h7q0 10-7 12z" fill="#6cc964"/><rect width="70" height="72" rx="16" fill="#a58350"/><path d="M5 4v64" stroke="#8e6e3f" stroke-width="1.500"/><g fill="#8a6b3d"><circle cx="37" cy="35" r="22" fill="none" stroke="#8a6b3d" stroke-width="2"/><ellipse cx="37" cy="31" rx="8" ry="9"/><path d="M22 50c5-10 25-10 30 0-8 9-22 9-30 0z"/></g></svg></button>
        <button class="app running" aria-label="Word"><svg viewBox="0 0 72 72"><path d="M15 2h59v18H15z" fill="#5fa3e6"/><path d="M15 20h59v16H15z" fill="#4279cc"/><path d="M15 36h59v17H15z" fill="#2c58b5"/><path d="M15 53h59v17H15z" fill="#1f3d85"/><rect x="-3" y="16" width="40" height="39" rx="3" fill="#2453ad"/><text x="17" y="45" font-size="27" font-weight="700" fill="#fff" text-anchor="middle">W</text></svg></button>
        <button class="app running" aria-label="TV"><svg viewBox="0 0 72 72"><rect width="72" height="72" rx="17" fill="url(#g-tv)"/><svg x="9" y="21" width="25" height="26" color="#fff"><use href="#apple"/></svg><text x="48" y="47" font-size="29" font-weight="500" fill="#fff" text-anchor="middle">tv</text></svg></button>
        <button class="app" aria-label="Numbers"><svg viewBox="0 0 72 72"><rect width="72" height="72" rx="17" fill="#fcfefb"/><path d="M8 5v62M18 1v70M28 0v72M38 0v72M48 0v72M58 1v70M1 10h70M0 20h72M0 30h72M0 40h72M0 50h72M1 60h70" stroke="#d8f0d2"/><path d="M13 38h10v24H13z" fill="#cf3b3f"/><path d="M25 24h10v38H25z" fill="#eb9336"/><path d="M37 10h10v52H37z" fill="#66cf48"/><path d="M49 17h10v45H49z" fill="#3d84ee"/></svg></button>
        <button class="app" aria-label="Podcasts"><svg viewBox="0 0 72 72"><rect width="72" height="72" rx="17" fill="url(#g-purple)"/><g fill="none" stroke="#fff" stroke-width="3.500"><path d="M25 56a24 24 0 1 1 22 0"/><path d="M26 46a15.500 15.500 0 1 1 20 0"/></g><circle cx="36" cy="32" r="6.500" fill="#fff"/><path d="M30 46c0-6 12-6 12 0 0 6-2 17-6 17s-6-11-6-17z" fill="#fff"/></svg></button>
        <button class="app" aria-label="Keynote"><svg viewBox="0 0 72 72"><rect width="72" height="72" rx="17" fill="#fff"/><path d="M0 15h15M58 15h14M0 34h72M0 52h72M20 34v38M50 34v38" stroke="#c9e0f0" stroke-width="1.500"/><path d="M35 30h3v33h-3z" fill="#8a9096"/><path d="M25 62h23v2H25z" fill="#777"/><path d="M17 8h39l3 21H14z" fill="#2f7fe0"/><path d="M21 11h31l2 14H19z" fill="#fff"/><circle cx="37" cy="19" r="7" fill="#5ec5d8"/><path d="M37 19V12a7 7 0 0 1 6 10z" fill="#f0883a"/><path d="M37 19l6 3a7 7 0 0 1-9 3z" fill="#6c5ac8"/></svg></button>
        <button class="app" aria-label="App Store"><svg viewBox="0 0 72 72"><rect width="72" height="72" rx="17" fill="url(#g-blue)"/><g stroke="#fff" stroke-width="6" stroke-linecap="round"><path d="M39 17L25 42M33 17l22 38M14 44h26M50 44h8M20 52l-2 3"/></g></svg><span class="badge">7</span></button>
        <button class="app running" aria-label="System Settings"><svg viewBox="0 0 72 72"><rect width="72" height="72" rx="17" fill="#b9bec2"/><circle cx="36" cy="36" r="31" fill="#2e2e30"/><circle cx="36" cy="36" r="27" fill="none" stroke="#a0a3a6" stroke-width="3" stroke-dasharray="2 1"/><circle cx="36" cy="36" r="22" fill="#4b4d50" stroke="#a8abae" stroke-width="4"/><circle cx="36" cy="36" r="13" fill="none" stroke="#77797c" stroke-width="3"/><path d="M36 36h22M36 36L25 17M36 36L25 55" stroke="#b9bcbf" stroke-width="4"/><circle cx="36" cy="36" r="4" fill="#ccc"/></svg></button>
        <button class="app" aria-label="Roblox"><svg viewBox="0 0 72 72"><path fill-rule="evenodd" d="M11-7l66 18-17 67L-7 60zM29 24l-5 18 19 6 5-18z" fill="url(#g-steel)"/></svg></button>
        <button class="app" aria-label="Roblox Studio"><svg viewBox="0 0 72 72"><path d="M12-6l66 18-6 23-43-11-2 11-24-8z" fill="#52c0fa"/><path d="M1 37l43 11 3-11 22 5-9 35L-5 60z" fill="#428ed8"/></svg></button>
        <div class="dock-rule"></div>
        <button class="app running" aria-label="Messages"><svg viewBox="0 0 72 72"><rect width="72" height="72" rx="17" fill="url(#g-green)"/><ellipse cx="36" cy="34" rx="26" ry="22" fill="url(#g-white)"/><path d="M24 50c0 4-2 7-5 10 6 0 10-3 12-6z" fill="#dcdcdc"/></svg></button>
        <button class="app running" aria-label="Chrome"><svg viewBox="0 0 72 72"><rect width="72" height="72" rx="17" fill="#f3f2f1"/><use href="#chrome"/></svg></button>
        <button class="app running" aria-label="Music"><svg viewBox="0 0 72 72"><rect width="72" height="72" rx="17" fill="url(#g-red)"/><path d="M27 17l25-6v38c0 8-13 9-13 2 0-5 5-7 9-7V24l-17 4v25c0 8-14 9-14 1 0-5 6-7 10-7z" fill="#fff"/></svg></button>
        <button class="app running" aria-label="Zoom"><svg viewBox="0 0 72 72"><rect width="72" height="72" rx="17" fill="#2459ea"/><text x="36" y="42" font-size="19" font-weight="600" fill="#fff" text-anchor="middle">zoom</text></svg></button>
        <button class="app running" aria-label="Excel"><svg viewBox="0 0 72 72"><rect width="72" height="72" rx="17" fill="#fff"/><path d="M19 12h41v12H19z" fill="#62bd85"/><path d="M19 24h41v11H19z" fill="#419c66"/><path d="M19 35h21v13H19zM19 48h41v11H19z" fill="#2b5838"/><path d="M40 35h20v13H40z" fill="#35794a"/><rect x="6" y="22" width="27" height="27" rx="2" fill="#2f7d47"/><text x="19.500" y="42" font-size="19" font-weight="700" fill="#fff" text-anchor="middle">X</text></svg></button>
        <button class="app running" aria-label="PowerPoint"><svg viewBox="0 0 72 72"><rect width="72" height="72" rx="17" fill="#fff"/><circle cx="37" cy="36" r="24" fill="#d9694a"/><path d="M37 12a24 24 0 0 1 24 24H37z" fill="#ee9474"/><path d="M13 36h48a24 24 0 0 1-48 0z" fill="#c7553a"/><rect x="8" y="22" width="28" height="27" rx="2" fill="#b8431f"/><text x="22" y="42" font-size="19" font-weight="700" fill="#fff" text-anchor="middle">P</text></svg></button>
        <div class="dock-rule"></div>
        <button class="app" aria-label="Minimized window"><svg viewBox="0 0 72 72"><path d="M4-6h64v83H4z" fill="#ececee"/><path d="M4-6h64v9H4z" fill="#2b2d35"/><circle cx="7" cy="-3" r="1" fill="#d55"/><circle cx="10" cy="-3" r="1" fill="#db5"/><path d="M14 15h44v57H14z" fill="#fff"/><circle cx="29" cy="26" r="3" fill="#8a3440"/><path d="M34 24h12M34 28h12" stroke="#999" stroke-width="2"/><path d="M19 38h35M21 41h31M24 44h24M21 48h32" stroke="#aaa"/><path d="M19 54h14M40 54h14M40 58h12M22 68h30" stroke="#7d9ab8"/><rect x="50" y="48" width="26" height="26" rx="6" fill="#f3f2f1"/><svg x="50" y="48" width="26" height="26"><use href="#chrome"/></svg></svg></button>
        <button class="app" aria-label="Trash"><svg viewBox="0 0 72 72"><path d="M5 2h62l-8 66c-1 8-45 8-46 0z" fill="#69737a"/><path d="M14 8l6 58M58 8l-6 58" stroke="#8f9aa1" stroke-width="3" opacity=".6"/><ellipse cx="36" cy="3" rx="31" ry="8" fill="#3f474d"/><path d="M9 4l6-9 7 3 6-6 9 7 8-7 8 5 6-1 4 8-8 6-9-3-10 5-12-4-8 2z" fill="#e3e1df"/><path d="M22-2l5 10M34-5l4 10M50-6l-6 11M54 3l4 3" stroke="#777" stroke-width="2"/><path d="M27 0l5 4M48 3l5 4" stroke="#3fa3d8" stroke-width="3"/></svg></button>
    </nav>

    <script src="grid.js"></script>
</body>
</html>
```

FILE: styles.css
```css
*,
*::before,
*::after {
    box-sizing: border-box;
}

body {
    margin: 0;
    height: 100vh;
    overflow: hidden;
    display: flex;
    flex-direction: column;
    font-family: Inter, "Liberation Sans", sans-serif;
    font-size: 22px;
    color: #fff;
    background:
        radial-gradient(circle at 1% 98%, #2c2029 0, transparent 4%),
        radial-gradient(circle at 50% 100%, #6d3a62 0, transparent 8%),
        linear-gradient(90deg, #46302a, #6b4530 25%, #7a4a2c 42%, #4a2d35 55%, #4f3024 75%, #5d3a29);
}

button,
input,
select {
    font: inherit;
    color: inherit;
    background: none;
    border: none;
    padding: 0;
    margin: 0;
}

button {
    display: flex;
    align-items: center;
    white-space: nowrap;
}

svg {
    display: block;
    flex: none;
    overflow: visible;
}

.defs {
    position: absolute;
    width: 0;
    height: 0;
}

.chev {
    width: 14px;
    height: 10px;
}

.dim {
    color: #858585;
}

.bright {
    color: #fff;
}

/* menu bar */
.menubar {
    flex: none;
    height: 49px;
    padding: 0 39px 4px 38px;
    display: flex;
    align-items: center;
    justify-content: space-between;
    font-size: 25px;
    color: #f0e9e7;
    background: linear-gradient(90deg, #453339, #4b3431 28%, #5c372b 55%, #5e382c);
}

.menus,
.status-icons {
    display: flex;
    align-items: center;
}

.menus {
    gap: 43px;
}

.menus .app-name {
    font-weight: 700;
}

.status-icons {
    gap: 36px;
}

.status-icons time {
    font-size: 26px;
}

.zoom-word {
    font-size: 32px;
    line-height: 32px;
    font-weight: 500;
}

/* window */
.window {
    position: relative;
    flex: 1;
    min-height: 0;
    display: flex;
    flex-direction: column;
    border-radius: 20px;
    overflow: hidden;
    background: #2d2d2d;
    box-shadow: 0 0 0 1px #000;
}

.window::after {
    content: "";
    position: absolute;
    inset: 0;
    border: 2px solid rgba(255, 255, 255, 0.25);
    border-radius: 20px;
    pointer-events: none;
    z-index: 5;
}

.titlebar {
    flex: none;
    height: 65px;
    padding: 0 22px 0 26px;
    display: flex;
    align-items: center;
    background: #363636;
}

.lights {
    display: flex;
    gap: 16px;
}

.light {
    width: 24px;
    height: 24px;
    border-radius: 50%;
}

.red {
    background: radial-gradient(circle, #8c1a10 0 4px, #ed6a5f 5px);
}

.yellow {
    background: #f5bf4f;
}

.green {
    background: #61c455;
}

.autosave {
    display: flex;
    align-items: center;
    gap: 13px;
    margin-left: 54px;
    font-weight: 500;
    color: #d8d8d8;
}

.switch {
    position: relative;
    width: 79px;
    height: 28px;
}

.switch input {
    appearance: none;
    display: block;
    width: 79px;
    height: 28px;
    border-radius: 14px;
    background: #1e1e1e;
}

.switch input::before {
    content: "";
    display: block;
    width: 24px;
    height: 24px;
    margin: 2px;
    float: left;
    border-radius: 50%;
    background: #f6f6f6;
}

.switch span {
    position: absolute;
    left: 32px;
    top: 0;
    font-size: 16px;
    line-height: 28px;
}

.quick {
    display: flex;
    align-items: center;
    gap: 21px;
    margin-left: 24px;
}

.quick svg:not(.chev) {
    fill: none;
    stroke: currentColor;
    stroke-width: 2.5px;
}

.undo {
    gap: 14px;
}

.doc-title {
    position: absolute;
    left: 50%;
    transform: translateX(-50%);
    display: flex;
    align-items: center;
    gap: 9px;
    margin: 0;
    font-size: 26px;
    font-weight: 700;
    white-space: nowrap;
}

.title-right {
    display: flex;
    gap: 36px;
    margin-left: auto;
}

/* ribbon tabs */
.tabs {
    flex: none;
    height: 60px;
    padding: 0 20px 0 22px;
    display: flex;
    gap: 50px;
    font-size: 26px;
    font-weight: 500;
    color: #e0e0e0;
}

.tabs > button {
    height: 57px;
    border-bottom: 6px solid transparent;
    border-top: 8px solid transparent;
}

.tabs > .active {
    font-weight: 700;
    border-image: linear-gradient(transparent 50%, #e8e8e8 50%) 6;
}

.tabs > .tell {
    gap: 19px;
    margin-left: -12px;
}

.tab-actions {
    display: flex;
    gap: 20px;
    margin-left: auto;
    padding-top: 8px;
}

.tab-actions button {
    height: 48px;
    gap: 10px;
    padding: 0 12px 0 17px;
    border-radius: 6px;
    background: #5f5f5f;
    font-size: 24px;
    font-weight: 600;
    color: #ececec;
}

/* ribbon */
.ribbon {
    flex: none;
    height: 150px;
    padding-top: 8px;
    border-bottom: 2px solid #000;
    display: flex;
    align-items: flex-start;
    overflow: hidden;
    font-size: 21px;
}

.rule {
    flex: none;
    width: 2px;
    height: 124px;
    background: #4c4c4c;
}

.mini-rule {
    width: 2px;
    height: 36px;
    margin: 0 14px;
    background: #4c4c4c;
}

.group {
    flex: none;
    height: 132px;
}

.row {
    display: flex;
    align-items: center;
    gap: 4px;
    height: 48px;
}

.tools {
    display: flex;
    align-items: center;
    gap: 0;
}

.tool {
    width: 52px;
    height: 48px;
    justify-content: center;
}

.split {
    gap: 14px;
    padding: 0 8px;
}

.only-chev {
    width: 20px;
    justify-content: center;
}

.stack button {
    height: 44px;
    gap: 12px;
}

.big {
    flex-direction: column;
    padding-top: 6px;
    line-height: 24px;
    text-align: center;
}

.big-icon {
    display: flex;
    align-items: center;
    gap: 12px;
    height: 64px;
    margin-bottom: 9px;
}

.clipboard {
    width: 208px;
    padding-left: 34px;
    display: flex;
    gap: 14px;
}

.paste {
    width: 78px;
    align-items: flex-start;
}

.paste .big-icon {
    gap: 8px;
}

.paste span:last-child {
    width: 66px;
}

.font,
.align,
.wrap,
.number {
    display: flex;
    flex-direction: column;
    gap: 16px;
    padding-top: 10px;
}

.font {
    width: 538px;
    padding-left: 20px;
}

.align {
    width: 322px;
    padding-left: 18px;
}

.align svg:not(.chev) {
    fill: none;
    stroke: currentColor;
    stroke-width: 2px;
}

.wrap {
    width: 276px;
    padding-left: 24px;
}

.number {
    width: 350px;
    padding-left: 20px;
}

.number .tools {
    margin-left: -4px;
}

.glyph {
    fill: currentColor;
    stroke: none;
    font-weight: 300;
}

.styles {
    width: 362px;
    padding-left: 24px;
    display: flex;
    gap: 16px;
}

.cells {
    width: 192px;
    padding-left: 26px;
}

.edit {
    width: 308px;
    padding-left: 26px;
    display: flex;
    gap: 16px;
}

.analyze {
    width: 128px;
    padding-left: 24px;
}

.sens {
    padding-left: 24px;
}

.labeled {
    gap: 12px;
}

.bold {
    font-size: 26px;
    font-weight: 700;
    color: #ccc;
}

.italic {
    font-family: "Liberation Serif", serif;
    font-size: 30px;
    font-style: italic;
    color: #ccc;
}

.underline {
    font-size: 26px;
    text-decoration: underline;
    text-underline-offset: 6px;
    color: #ccc;
}

.sign {
    font-size: 34px;
    font-weight: 300;
}

.pick {
    position: relative;
    height: 48px;
}

.pick select {
    appearance: none;
    width: 100%;
    height: 48px;
    padding: 0 12px;
    border: 1px solid #4a4a4a;
    border-radius: 6px;
    background: #383838;
    font-size: 23px;
}

.pick .chev {
    position: absolute;
    right: 8px;
    top: 20px;
}

.pick-font {
    width: 282px;
}

.pick-size {
    width: 107px;
}

.pick-number {
    width: 310px;
}

.pick-number select {
    background: #323232;
    border-color: #3c3c3c;
}

/* formula bar */
.formula-bar {
    flex: none;
    height: 52px;
    padding: 0 8px 0 0;
    display: flex;
    align-items: center;
    gap: 8px;
    background: #262626;
}

.name-box {
    width: 170px;
    display: flex;
    align-items: center;
    justify-content: space-between;
    padding: 0 10px 0 21px;
    margin-right: 20px;
    color: #ddd;
}

.name-box input {
    width: 100px;
}

.formula-bar button {
    width: 48px;
}

.fx {
    width: 44px;
    padding-left: 6px;
    font-family: "Liberation Serif", serif;
    font-style: italic;
    font-size: 34px;
    line-height: 38px;
    color: #666;
}

.formula {
    flex: 1;
    height: 38px;
    padding: 0 14px;
    background: #383838;
    font-size: 24px;
    font-weight: 500;
}

/* sheet */
.sheet-area {
    position: relative;
    flex: 1;
    min-height: 0;
    display: flex;
    border-top: 6px solid #ededed;
    background: #fff;
}

.sheet {
    flex: 1;
    overflow: hidden;
    color: #000;
    font-family: Lato, Carlito, sans-serif;
    font-size: 15px;
    line-height: 20px;
}

#grid {
    width: 2902px;
    table-layout: fixed;
    border-collapse: separate;
    border-spacing: 0;
}

#grid td {
    height: 24px;
    padding: 0 2px;
    border-right: 2px solid #d4d4d4;
    border-bottom: 2px solid #d4d4d4;
    vertical-align: bottom;
    white-space: nowrap;
}

#grid tr.short td,
#grid tr.short th {
    height: 22px;
}

#grid th {
    padding: 0;
    font-size: 15px;
    font-weight: 700;
    color: #fff;
    background: #161616;
}

#grid thead th {
    position: sticky;
    top: 0;
    z-index: 2;
    height: 34px;
    border-right: 2px solid #555;
    border-bottom: 2px solid #c4c4c4;
}

#grid tbody th {
    border-right: 2px solid #c4c4c4;
    border-bottom: 2px solid #6a6a6a;
}

#grid thead th.current {
    background: #585858;
    border-bottom: 4px solid #3c7249;
}

#grid tbody th.current {
    background: #585858;
    border-right: 4px solid #3c7249;
}

#grid thead th.corner {
    background: linear-gradient(135deg, transparent 50%, #6a6a6a 50%) no-repeat 6px 8px / 20px 20px #161616;
    border-right-color: #c4c4c4;
}

#grid .fill {
    background: #eaf2fc;
    border-color: #eaf2fc;
}

#grid .text {
    vertical-align: top;
    line-height: 22px;
}

#grid .head {
    font-weight: 700;
    border-bottom-color: #000;
}

#grid .pct {
    text-align: right;
}

#grid .under {
    border-bottom-color: #000;
}

#grid .money {
    position: relative;
    padding: 0 6px;
    text-align: right;
}

#grid .money span {
    float: left;
}

#grid .total::after {
    content: "";
    position: absolute;
    left: -1px;
    right: -2px;
    bottom: -4px;
    height: 6px;
    border-top: 2px solid #000;
    border-bottom: 2px solid #000;
}

.indent {
    padding-left: 20px;
}

#grid .selected {
    position: relative;
    padding-left: 3px;
}

#grid .selected::before {
    content: "";
    position: absolute;
    inset: -4px;
    border: 4px solid #3c7249;
}

#grid .selected::after {
    content: "";
    position: absolute;
    right: -8px;
    bottom: -8px;
    width: 14px;
    height: 14px;
    border: 2px solid #fff;
    background: #3c7249;
}

.bar-v,
.bar-h {
    position: absolute;
    border-radius: 7px;
    background: rgba(0, 0, 0, 0.17);
}

.bar-v {
    right: 7px;
    top: 39.6%;
    bottom: 18.7%;
    width: 14px;
}

.bar-h {
    left: 38px;
    right: 23.2%;
    bottom: 6px;
    height: 14px;
}

/* sheet tabs and status bar */
.sheet-tabs {
    flex: none;
    height: 52px;
    padding-left: 30px;
    display: flex;
    align-items: center;
    background: #303030;
    border-top: 2px solid #606060;
}

.sheet-tabs button:first-child {
    margin-right: 32px;
}

.sheet-tabs .sheet-tab {
    align-self: flex-start;
    justify-content: center;
    width: 226px;
    height: 46px;
    margin: -2px 0 0 31px;
    padding-top: 4px;
    border-radius: 0 0 6px 6px;
    background: #fff;
    font-family: "Liberation Sans", sans-serif;
    font-size: 24px;
    font-weight: 700;
    color: #3f7d4f;
}

.sheet-tabs .add {
    align-self: stretch;
    width: 78px;
    margin-bottom: 9px;
    padding: 6px 0 0 29px;
    border-right: 2px solid #606060;
}

.statusbar {
    flex: none;
    height: 46px;
    padding: 0 50px 0 49px;
    display: flex;
    align-items: center;
    border-top: 2px solid #000;
    background: linear-gradient(#484848, #363636);
    font-size: 24px;
    font-weight: 300;
}

.views {
    display: flex;
    gap: 43px;
    margin-left: auto;
}

.views svg,
.zoomer svg {
    fill: none;
    stroke: #f0f0f0;
    stroke-width: 2.5px;
}

.zoomer svg {
    stroke-width: 5px;
}

.zoomer {
    display: flex;
    align-items: center;
    gap: 14px;
    margin: 0 36px 0 38px;
}

.slider {
    position: relative;
    display: flex;
}

.slider i {
    position: absolute;
    left: 97px;
    top: 13px;
    width: 6px;
    height: 6px;
    border-radius: 50%;
    background: #3a3a3a;
}

.slider input {
    appearance: none;
    width: 200px;
    height: 32px;
}

.slider input::-webkit-slider-runnable-track {
    height: 8px;
    border-radius: 4px;
    background: #6e6e6e;
}

.slider input::-webkit-slider-thumb {
    appearance: none;
    width: 32px;
    height: 32px;
    margin-top: -12px;
    border-radius: 50%;
    background: #9c9c9c;
}

/* dock */
.dock {
    flex: none;
    align-self: center;
    height: 110px;
    margin: 4px 0 10px;
    padding: 14px 12px 0 14px;
    display: flex;
    gap: 19px;
    border: 2px solid rgba(255, 255, 255, 0.2);
    border-radius: 30px;
    background:
        radial-gradient(ellipse at 56% 100%, #4a2740 0, transparent 9%),
        linear-gradient(90deg, #3a2822, #472b1f 20%, #573521 36%, #3a2522 52%, #30221f 66%, #33241f 86%, #4f3022);
}

.app {
    position: relative;
    display: block;
    width: 72px;
    height: 72px;
}

.app svg {
    width: 72px;
    height: 72px;
}

.app svg svg {
    width: revert-layer;
    height: revert-layer;
}

.running::after {
    content: "";
    position: absolute;
    left: 32px;
    top: 82px;
    width: 8px;
    height: 8px;
    border-radius: 50%;
    background: #c8aca0;
}

.badge {
    position: absolute;
    right: -10px;
    top: -8px;
    width: 34px;
    height: 34px;
    border-radius: 50%;
    background: #e6503f;
    font-size: 20px;
    line-height: 34px;
    text-align: center;
}

.dock-rule {
    width: 2px;
    height: 82px;
    margin: -2px 10px 0;
    background: rgba(255, 255, 255, 0.28);
}
```

FILE: grid.js
```js
const FIRST_ROW = 43;
const LAST_ROW = 91;
const LAST_FILLED_ROW = 80;
const FILLED_COLUMNS = 6;

// column widths in pixels, row header first
const widths = [34, 18, 140, 322, 142, 140, 24, 88, 28, 372, 142, 146, 34, 88, 88,
    216, 88, 88, 88, 88, 88, 88, 88, 88, 88, 88];
const letters = 'ABCDEFGHIJKLMNOPQRSTUVWXY'.split('');

const cells = {
    B43: { html: 'Other expense' },
    D43: { html: '453,846', cls: 'money' },
    B44: { html: 'Income tax expense' },
    D44: { html: '9,511,538', cls: 'money under' },
    E44: { html: '', cls: 'under' },
    B45: { html: 'Totals' },
    D45: { html: '<span>$</span>555,260,542', cls: 'money total' },
    E45: { html: '<span>$</span>555,260,542', cls: 'money total' },
    A47: {
        cols: 6, rows: 9, cls: 'text',
        html: [
            '<span class="indent">One task during the planning phase is to consider the concept of materiality as it applies to the client. Auditors will</span>',
            'design procedures to identify and correct errors or irregularities that would have a material effect on the financial',
            'statements and affect the decision-making of the users of the financial statements. Materiality is used in determining',
            'audit procedures and sample selections, and evaluating differences from client records to audit results. Materiality is',
            'the maximum amount of misstatement, individually or in aggregate, that can be accepted in the financial statements.',
            'In selecting the benchmark to be used to calculate materiality, the auditors should consider the key drivers of the',
            'business. They should ask, “What are the end users (that is, stockholders, banks, etc.) of the accounts going to be',
            'looking at?” For example, will stockholders be interested in profit figures that can be used to pay dividends and',
            'increase share price?'
        ].join('<br>')
    },
    A56: {
        cols: 6, rows: 3, cls: 'text',
        html: [
            '<span class="indent">W&amp;S Partners’ audit methodology dictates that one planning materiality (PM) amount is to be used for the financial</span>',
            'statements as a whole. The benchmark selected for determining materiality is the one determined to be the key',
            'driver of the business.'
        ].join('<br>')
    },
    B59: { cols: 5, html: 'W&amp;S Partners uses the following percentages as starting points for the various benchmarks:' },
    C61: { html: 'Benchmark', cls: 'head' },
    D61: { html: 'Threshold (%)', cls: 'head' },
    C62: { html: 'Income before tax' },
    D62: { html: '5.0%', cls: 'pct' },
    C63: { html: 'Total revenue' },
    D63: { html: '0.5%', cls: 'pct' },
    C64: { html: 'Gross profit' },
    D64: { html: '2.0%', cls: 'pct' },
    C65: { html: 'Total assets' },
    D65: { html: '0.5%', cls: 'pct' },
    C66: { html: 'Equity' },
    D66: { html: '1.0%', cls: 'pct' },
    A68: { cols: 6, html: '<span class="indent">These starting points can be increased or decreased by taking into account qualitative client factors, which could be:</span>' },
    A70: { html: '•' },
    B70: {
        cols: 5, rows: 2, cls: 'text',
        html: 'The nature of the client’s business and industry (for example, rapidly changing, either through growth or<br>downsizing, or an unstable environment).'
    },
    A72: { html: '•' },
    B72: { cols: 5, html: 'Whether the client is a public company (or a subsidiary of a public company) subject to regulations.' },
    A74: { html: '•' },
    B74: { cols: 5, html: 'The knowledge of or high risk of fraud.' },
    A75: {
        cols: 6, rows: 6, cls: 'text',
        html: [
            'Typically, income before tax is used; however, it cannot be used if reporting a loss for the year or if profitability is not',
            'consistent.',
            '<span class="indent">When calculating PM based on interim figures, it may be necessary to annualize the results. This allows the</span>',
            'auditors to plan the audit properly based on an approximate projected year-end balance. Then, at year-end, the figure',
            'is adjusted, if necessary, to reflect the actual results.'
        ].join('<br>')
    },
    P49: { html: '3', cls: 'selected' }
};

const grid = document.getElementById('grid');
const covered = new Set();

grid.querySelector('colgroup').innerHTML = widths.map(w => `<col style="width:${w}px">`).join('');

grid.querySelector('thead').innerHTML = '<tr><th class="corner"></th>' +
    letters.map(l => `<th${l === 'P' ? ' class="current"' : ''}>${l}</th>`).join('') + '</tr>';

let body = '';
for (let row = FIRST_ROW; row <= LAST_ROW; row++) {
    body += `<tr${row < 45 ? ' class="short"' : ''}><th${row === 49 ? ' class="current"' : ''}>${row}</th>`;
    letters.forEach((letter, col) => {
        if (covered.has(letter + row)) return;
        const cell = cells[letter + row] || { html: '' };
        const cols = cell.cols || 1;
        const rows = cell.rows || 1;
        for (let r = 0; r < rows; r++) {
            for (let c = 0; c < cols; c++) {
                covered.add(letters[col + c] + (row + r));
            }
        }
        const fill = col < FILLED_COLUMNS && row <= LAST_FILLED_ROW ? 'fill ' : '';
        body += `<td class="${fill}${cell.cls || ''}" colspan="${cols}" rowspan="${rows}">${cell.html}</td>`;
    });
    body += '</tr>';
}
grid.querySelector('tbody').innerHTML = body;

// row 43 is partly scrolled under the column letters
document.getElementById('sheet').scrollTop = 4;
```
